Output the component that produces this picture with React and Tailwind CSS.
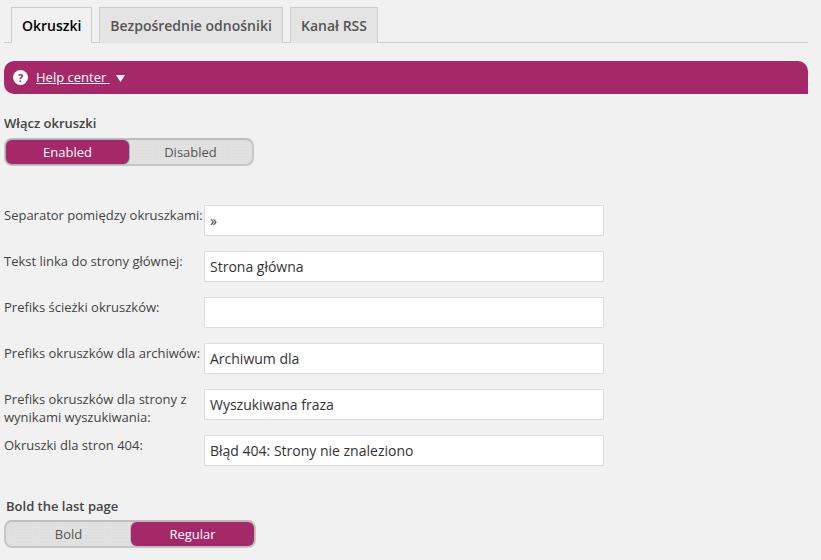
const font = { fontFamily: '"Open Sans", sans-serif' };

const rows = [
  ["Separator pomiędzy okruszkami:", "»"],
  ["Tekst linka do strony głównej:", "Strona główna"],
  ["Prefiks ścieżki okruszków:", ""],
  ["Prefiks okruszków dla archiwów:", "Archiwum dla"],
  ["Prefiks okruszków dla strony z wynikami wyszukiwania:", "Wyszukiwana fraza"],
  ["Okruszki dla stron 404:", "Błąd 404: Strony nie znaleziono"],
];

function Toggle({ left, right, active, width, leftW, ring }) {
  const on = `bg-[#a52868] text-white ${ring}`;
  return (
    <div className={`flex h-[28px] rounded-[8px] bg-[#e1e1e1] bg-[radial-gradient(#dadada_0.6px,transparent_0.6px)] bg-[length:3px_3px] border-2 border-[#c6c6c6] border-t-[#bdbdbd] text-[13px] leading-[24px] ${width}`}>
      <div className={`${leftW} text-center rounded-[6px] ${active === 0 ? on : "text-[#555]"}`}>{left}</div>
      <div className={`flex-1 text-center rounded-[6px] ${active === 1 ? on : "text-[#555]"}`}>{right}</div>
    </div>
  );
}

function Tab({ children, active, w }) {
  return (
    <div className={`h-[36px] border border-[#ccc] px-[10px] text-[14px] font-semibold leading-[35px] text-center ${w} ${active ? "bg-[#f1f1f1] border-b-[#f1f1f1] text-black -mb-px" : "bg-[#e4e4e4] border-b-0 text-[#555]"}`}>
      {children}
    </div>
  );
}

export default function App() {
  return (
    <div style={font} className="w-[821px] h-[560px] overflow-hidden bg-[#f1f1f1] text-[#444]">
      <div className="ml-1 mr-[13px] pt-[7px] flex gap-[7px] border-b border-[#ccc] pl-[7px] h-[43px]">
        <Tab active w="w-[81px]">Okruszki</Tab>
        <Tab w="w-[184px]">Bezpośrednie odnośniki</Tab>
        <Tab w="w-[88px]">Kanał RSS</Tab>
      </div>

      <div className="mt-[18px] ml-1 mr-[13px] h-[33px] bg-[#a52868] rounded-tl-[10px] rounded-tr-[10px] rounded-bl-[10px] flex items-center pl-[9px] text-white">
        <span className="w-[15px] h-[15px] rounded-full bg-white text-[#a52868] text-[11px] font-bold flex items-center justify-center leading-none">?</span>
        <span className="ml-[8px] text-[13px] underline whitespace-pre">Help center </span>
        <svg className="ml-[6px] mt-[2px]" width="9" height="7" viewBox="0 0 9 7"><path d="M0 0h9L4.500 7z" fill="#fff" /></svg>
      </div>

      <div className="ml-1 mt-[20px] text-[13px] font-semibold leading-[18px]">Włącz okruszki</div>
      <div className="ml-1 mt-[6px]">
        <Toggle left="Enabled" right="Disabled" active={0} width="w-[250px]" leftW="w-[123px]" ring="shadow-[0_0_0_1px_#9db4be]" />
      </div>

      <div className="mt-[39px] ml-1 flex flex-col gap-[15px]">
        {rows.map(([label, value]) => (
          <div key={label} className="flex h-[31px]">
            <div className="w-[200px] text-[13px] leading-[18px] pt-[1px] shrink-0">{label}</div>
            <div className="w-[400px] h-[31px] bg-white border border-[#ddd] text-[14px] leading-[29px] text-[#333] px-[5px]">{value}</div>
          </div>
        ))}
      </div>

      <div className="ml-[6px] mt-[31px] text-[13px] font-semibold leading-[18px]">Bold the last page</div>
      <div className="ml-1 mt-[5px]">
        <Toggle left="Bold" right="Regular" active={1} width="w-[252px]" leftW="w-[125px]" ring="shadow-[0_0_0_1px_#bbbbbb]" />
      </div>
    </div>
  );
}
